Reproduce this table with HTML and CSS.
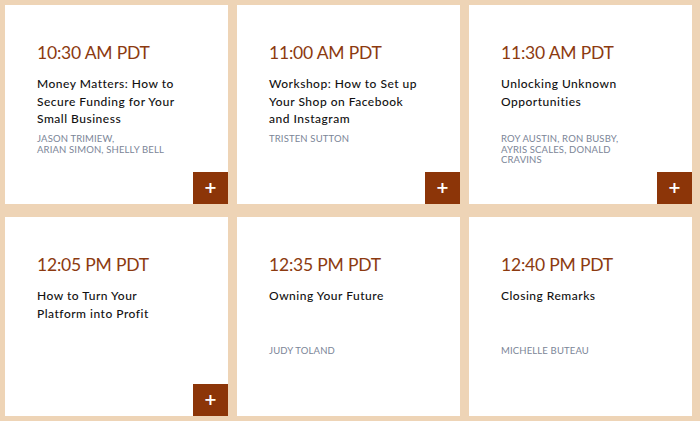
FILE: index.html
```html
<!DOCTYPE html>
<html>
<head>
<meta charset="utf-8">
<link rel="stylesheet" href="styles.css">
</head>
<body>
<div class="grid">
  <div class="card">
    <div class="time">10:30 AM PDT</div>
    <div class="title">Money Matters: How to Secure Funding for Your Small Business</div>
    <div class="speakers">JASON TRIMIEW,<br>ARIAN SIMON, SHELLY BELL</div>
    <div class="plus">+</div>
  </div>
  <div class="card">
    <div class="time">11:00 AM PDT</div>
    <div class="title">Workshop: How to Set up Your Shop on Facebook and Instagram</div>
    <div class="speakers">TRISTEN SUTTON</div>
    <div class="plus">+</div>
  </div>
  <div class="card">
    <div class="time">11:30 AM PDT</div>
    <div class="title">Unlocking Unknown Opportunities</div>
    <div class="speakers">ROY AUSTIN, RON BUSBY,<br>AYRIS SCALES, DONALD<br>CRAVINS</div>
    <div class="plus">+</div>
  </div>
  <div class="card">
    <div class="time">12:05 PM PDT</div>
    <div class="title">How to Turn Your Platform into Profit</div>
    <div class="speakers"></div>
    <div class="plus">+</div>
  </div>
  <div class="card">
    <div class="time">12:35 PM PDT</div>
    <div class="title">Owning Your Future</div>
    <div class="speakers">JUDY TOLAND</div>
  </div>
  <div class="card">
    <div class="time">12:40 PM PDT</div>
    <div class="title">Closing Remarks</div>
    <div class="speakers">MICHELLE BUTEAU</div>
  </div>
</div>
</body>
</html>
```
FILE: styles.css
```css
html, body {
  margin: 0;
  padding: 0;
  background: #eed4b6;
}
.grid {
  display: grid;
  grid-template-columns: 223px 223px 223px;
  grid-auto-rows: 199px;
  column-gap: 9px;
  row-gap: 13px;
  padding: 5px 0 0 5px;
}
.card {
  position: relative;
  background: #ffffff;
  padding: 37px 0 0 32px;
  box-sizing: border-box;
  font-family: "Lato", "Noto Sans", sans-serif;
}
.time {
  font-size: 17.5px;
  line-height: 22px;
  color: #8c3a10;
  letter-spacing: -0.2px;
}
.title {
  margin-top: 11px;
  max-width: 150px;
  font-size: 12px;
  line-height: 17.5px;
  color: #111111;
  letter-spacing: 0.5px;
  font-weight: 500;
  min-height: 53px;
}
.speakers {
  margin-top: 6px;
  font-size: 9.5px;
  line-height: 10.5px;
  color: #7b8597;
  letter-spacing: 0.15px;
}
.plus {
  position: absolute;
  right: 0;
  bottom: 0;
  width: 35px;
  height: 32px;
  background: #8c3508;
  color: #ffffff;
  font-family: "DejaVu Sans", sans-serif;
  font-weight: bold;
  font-size: 16px;
  line-height: 32px;
  text-align: center;
}
```
